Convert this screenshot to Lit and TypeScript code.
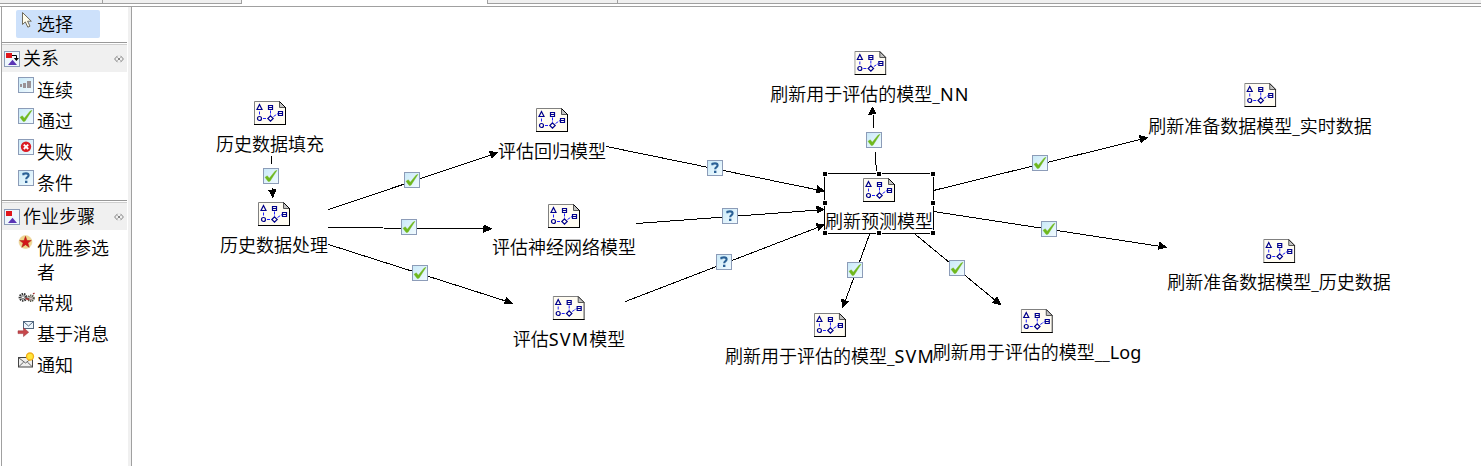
import { LitElement, html, svg, css } from "lit";
import { customElement, property } from "lit/decorators.js";

type Kind = "pass" | "cond" | "fail" | "seq";

const TILE_ART: Record<Kind, unknown> = {
  pass: svg`<path d="M2 9.300 L4.300 7.800 L6.300 10.200 L12 3.200 L14 2.300 L7 13.200 L5.200 13.500z" fill="#6fb81e" stroke="#6fb81e" stroke-width=".4"/>`,
  cond: svg`<path d="M5.400 5.200 V3.800 Q6.600 3.400 8 3.400 Q10.600 3.400 10.600 5.300 Q10.600 6.500 9.200 7.300 Q8.200 7.900 8.200 9.300" fill="none" stroke="#2b6196" stroke-width="2.100"/><rect x="7" y="10.700" width="2.400" height="2.300" fill="#2b6196"/>`,
  fail: svg`<circle cx="8" cy="7.800" r="5.200" fill="#da1c24"/><path d="M5.800 5.600 L10.200 10 M10.200 5.600 L5.800 10" stroke="#fff" stroke-width="1.900"/>`,
  seq: svg`<path d="M2 7h2v3H2z M5 6h3v5H5z M9 4h4v7H9z" fill="#9a9296" shape-rendering="crispEdges"/>`,
};

const tile = (kind: Kind) => svg`
  <rect x=".5" y=".5" width="15" height="15" fill="url(#tile)" stroke="#8c9cb8"/>
  ${TILE_ART[kind]}`;

const tileGradient = svg`
  <defs><linearGradient id="tile" x1="0" y1="0" x2="1" y2="1">
    <stop offset="0" stop-color="#c9e9f8"/><stop offset="1" stop-color="#f2fbff"/>
  </linearGradient></defs>`;

@customElement("palette-icon")
class PaletteIcon extends LitElement {
  static styles = css`
    :host { display: block; width: 16px; height: 16px; }
    svg { display: block; overflow: visible; }
  `;
  @property() name = "";

  private art() {
    switch (this.name) {
      case "relations":
        return svg`<rect x=".5" y=".5" width="15" height="15" fill="#eef7fd" stroke="#8c9cb8"/>
          <rect x="2" y="2" width="6" height="5" fill="#e0161c"/>
          <path d="M4 14 L8.500 8.800 L13 14z" fill="#5b35b5"/>
          <path d="M8 4.500h4.500v4" fill="none" stroke="#000"/><path d="M9.800 7h5.200l-2.600 3z"/>`;
      case "steps":
        return svg`<rect x=".5" y=".5" width="15" height="15" fill="#eef7fd" stroke="#8c9cb8"/>
          <rect x="2" y="2" width="6" height="5" fill="#e0161c"/>
          <path d="M4 14 L8.500 8.800 L13 14z" fill="#5b35b5"/>`;
      case "star":
        return svg`<circle cx="7.500" cy="7" r="6.500" fill="#f0d68c" stroke="#e8cf98" stroke-width=".6"/>
          <path d="M7.500 1.300 L9 5.500 H13.300 L9.900 8.100 L11.200 12.300 L7.500 9.700 L3.800 12.300 L5.100 8.100 L1.700 5.500 H6z" fill="#d3161b" stroke="#a52318" stroke-width=".5"/>`;
      case "gears":
        return svg`<circle cx="5" cy="7.300" r="3.300" fill="#ddd" stroke="#333" stroke-width="2.200" stroke-dasharray="1.400 .9"/>
          <circle cx="5" cy="7.300" r="1.500" fill="#fff" stroke="#555" stroke-width=".7"/>
          <circle cx="13" cy="8.300" r="2.800" fill="#ddd" stroke="#554" stroke-width="2" stroke-dasharray="1.200 .8"/>
          <circle cx="13" cy="8.300" r="1.200" fill="#fff" stroke="#755" stroke-width=".7"/>
          <path d="M7.500 8.500l3.500 1M15 4l1.500-.8" stroke="#a32b2b" stroke-width="1.400"/>`;
      case "message":
        return svg`<rect x="5.500" y=".5" width="10" height="7" fill="#eef6fc" stroke="#51677f"/>
          <path d="M6 1l4.500 4L15 1" fill="none" stroke="#51677f"/>
          <path d="M0 9.800h5.500v-3l5.200 4.400-5.200 4.400v-3H0z" fill="#c8474b" stroke="#963138" stroke-width=".5"/>`;
      case "notify":
        return svg`<rect x=".5" y="5.500" width="14" height="9.500" fill="#eee" stroke="#444"/>
          <path d="M1 6l6.500 5L14 6M1 14.500l4.700-4.500M14 14.500l-4.700-4.500" fill="none" stroke="#666"/>
          <circle cx="12" cy="4.500" r="3.500" fill="#ffe63b" stroke="#f3ae19" stroke-width="1.300"/>`;
      case "cursor":
        return svg`<path d="M.5 .5 V12.500 L3.300 9.900 L5.800 15.200 L8 14.200 L5.600 9.200 H9.300z" fill="#fffdec" stroke="#6e6a5c"/>`;
      default:
        return tile(this.name as Kind);
    }
  }
  render() {
    return html`<svg width="16" height="16" viewBox="0 0 16 16">${tileGradient}${this.art()}</svg>`;
  }
}

@customElement("tool-palette")
class ToolPalette extends LitElement {
  static styles = css`
    :host {
      display: block; box-sizing: border-box; width: 130px; flex: none;
      border-left: 1px solid #a0a0a0; border-right: 3px solid #f0f0f0;
      padding: 3px 0 0 0;
    }
    .select {
      display: flex; box-sizing: border-box; width: 84px; height: 28px; margin-left: 14px;
      padding: 2px 0 0 6px; background: #cde1fb; border-radius: 2px;
    }
    .select .text { margin-left: -1px; }
    .head {
      display: flex; box-sizing: border-box; width: 125px; height: 30px;
      border-top: 1px solid #989898; padding: 1px 0 0;
    }
    .bar {
      display: flex; box-sizing: border-box; align-items: flex-start; width: 100%; height: 28px;
      border-top: 1px solid #cfcfcf; background: #f0f0f0; padding: 1px 3px 0 2px;
    }
    .bar palette-icon { margin-top: 5px; }
    .bar .text { flex: 1; margin-left: 3px; }
    .text { line-height: 24px; white-space: pre-line; }
    .first { margin-top: 4px; }
    .items { display: flex; flex-direction: column; gap: 7px; padding: 5px 0 0 16px; }
    .relations { height: 128px; box-sizing: border-box; }
    .item { display: flex; gap: 3px; }
    .item .text { padding-top: 1px; margin-bottom: -1px; }
    .pin { display: block; margin-top: 9px; }
  `;

  private head(icon: string, label: string, cls = "") {
    return html`<div class="head ${cls}"><div class="bar">
      <palette-icon name=${icon}></palette-icon><span class="text">${label}</span>
      <svg class="pin" width="10" height="8" viewBox="0 0 10 8">
        <path d="M3.500 .8 L.6 4 L3.500 7.200 M6.500 .8 L9.400 4 L6.500 7.200 M3.500 2.500l1.500 1.500l1.500-1.500M3.500 5.500l1.500-1.500l1.500 1.500" fill="none" stroke="#777" stroke-width=".9"/>
      </svg></div></div>`;
  }
  private item(icon: string, label: string) {
    return html`<div class="item"><palette-icon name=${icon}></palette-icon><span class="text">${label}</span></div>`;
  }
  render() {
    return html`
      <div class="select"><palette-icon name="cursor"></palette-icon><span class="text">选择</span></div>
      ${this.head("relations", "关系", "first")}
      <div class="items relations">
        ${this.item("seq", "连续")}${this.item("pass", "通过")}
        ${this.item("fail", "失败")}${this.item("cond", "条件")}
      </div>
      ${this.head("steps", "作业步骤")}
      <div class="items">
        ${this.item("star", "优胜参选\n者")}${this.item("gears", "常规")}
        ${this.item("message", "基于消息")}${this.item("notify", "通知")}
      </div>`;
  }
}

interface FlowNode { x: number; y: number; label: string; }
interface Edge { from: [number, number]; to: [number, number]; badge: [number, number]; kind: Kind; }

const NODES: FlowNode[] = [
  { x: 270, y: 101, label: "历史数据填充" },
  { x: 274, y: 202, label: "历史数据处理" },
  { x: 552, y: 108, label: "评估回归模型" },
  { x: 564, y: 204, label: "评估神经网络模型" },
  { x: 569, y: 296, label: "评估SVM模型" },
  { x: 870, y: 51, label: "刷新用于评估的模型_NN" },
  { x: 879, y: 178, label: "刷新预测模型" },
  { x: 1260, y: 83, label: "刷新准备数据模型_实时数据" },
  { x: 1279, y: 239, label: "刷新准备数据模型_历史数据" },
  { x: 830, y: 313, label: "刷新用于评估的模型_SVM" },
  { x: 1037, y: 309, label: "刷新用于评估的模型__Log" },
];

const EDGES: Edge[] = [
  { from: [271, 156], to: [272.5, 198], badge: [271, 176], kind: "pass" },
  { from: [328, 209], to: [498, 152], badge: [412, 180], kind: "pass" },
  { from: [328, 227], to: [492, 228.5], badge: [409, 227], kind: "pass" },
  { from: [328, 244], to: [513, 303], badge: [420, 273], kind: "pass" },
  { from: [606, 146], to: [825, 191], badge: [715, 168], kind: "cond" },
  { from: [636, 223], to: [825, 209], badge: [730, 216], kind: "cond" },
  { from: [625, 301], to: [825, 224], badge: [724, 262], kind: "cond" },
  { from: [876, 173], to: [872, 106], badge: [874, 140], kind: "pass" },
  { from: [933, 190], to: [1148, 137], badge: [1040, 163], kind: "pass" },
  { from: [933, 211], to: [1167, 247], badge: [1049, 229], kind: "pass" },
  { from: [869, 234], to: [842, 308], badge: [855, 270], kind: "pass" },
  { from: [915, 234], to: [1001, 305], badge: [957, 268], kind: "pass" },
];

@customElement("flow-canvas")
class FlowCanvas extends LitElement {
  static styles = css`
    :host { display: block; flex: 1; border-left: 1px solid #a0a0a0; }
    .wires { position: absolute; left: 0; top: 0; }
    .node {
      position: absolute; display: flex; flex-direction: column; align-items: center;
      gap: 7px; transform: translateX(-50%);
    }
    .label { line-height: 24px; white-space: nowrap; }
    .latin { font-weight: 400; }
    .caps { letter-spacing: 1.2px; }
    .sheet { display: block; }
  `;

  private edge(e: Edge) {
    const dx = e.to[0] - e.from[0], dy = e.to[1] - e.from[1];
    const len = Math.hypot(dx, dy), ux = dx / len, uy = dy / len;
    const bx = e.to[0] - ux * 8.5, by = e.to[1] - uy * 8.5;
    const head = `${e.to[0] + 0.5},${e.to[1] + 0.5} ${bx - uy * 4.2},${by + ux * 4.2} ${bx + uy * 4.2},${by - ux * 4.2}`;
    const [cx, cy] = e.badge;
    return svg`
      <g shape-rendering="crispEdges">
        <line x1=${e.from[0] + 0.5} y1=${e.from[1] + 0.5} x2=${bx + 0.5} y2=${by + 0.5} stroke="#000"/>
        ${Math.abs(dy) > Math.abs(dx) * 5
          ? svg`<rect x=${cx - 8} y=${cy - 12} width="16" height="24" fill="#fff"/>` : null}
        <polygon points=${head}/>
      </g>
      <g transform="translate(${cx - 8} ${cy - 8})">${tile(e.kind)}</g>`;
  }

  private sheet() {
    return html`<svg class="sheet" width="32" height="24" viewBox="0 0 32 24">
      <path d="M.5 .5H25.500L31 6V23H.5z" fill="#fffcf2"/>
      <path d="M.5 23V.5H26" fill="none" stroke="#808080"/>
      <path d="M25.500 .5V6.500H31z" fill="#c4c4c4"/>
      <path d="M25.500 1V6.500H31" fill="none" stroke="#555"/>
      <path d="M25.500 .5L31.300 6.300M31.500 6V24M0 23.500H32" fill="none" stroke="#000"/>
      <g fill="none" stroke="#00008b" stroke-width="1.200">
        <path d="M5.500 3.500L3 8.500H8z M14.500 4.500h4v4h-4z M14.500 6.500h4 M24.500 10.500h4v4h-4z M24.500 12.500h4 M16.500 14.800l2.700 2.700-2.700 2.700-2.700-2.700z"/>
        <circle cx="5.500" cy="17.500" r="2"/>
      </g>
      <path d="M5.500 10.500v4M16.500 9.500v5M9 17.500h3M19.500 15.500L24 12.500" fill="none" stroke="#2020ff" stroke-dasharray="3 1"/>
    </svg>`;
  }

  private label(text: string) {
    return text.split(/(SVM|NN|Log)/).map((part) =>
      part === "Log" ? html`<span class="latin">${part}</span>`
      : part === "SVM" || part === "NN" ? html`<span class="latin caps">${part}</span>` : part);
  }

  render() {
    return html`
      ${NODES.map((n) => html`<div class="node" style="left:${n.x}px;top:${n.y}px">
        ${this.sheet()}<span class="label">${this.label(n.label)}</span></div>`)}
      <svg class="wires" width="1481" height="466" viewBox="0 0 1481 466">
        ${tileGradient}
        ${EDGES.map((e) => this.edge(e))}
        <g shape-rendering="crispEdges">
          <rect x="824.500" y="173.500" width="109" height="60" fill="none" stroke="#000"/>
          ${[823, 877, 931].map((x) => [172, 201, 231].map((y) =>
            x === 877 && y === 201 ? null : svg`<rect x=${x - 1} y=${y - 1} width="6" height="6" fill="#fff"/><rect x=${x} y=${y} width="4" height="4"/>`))}
        </g>
      </svg>`;
  }
}

@customElement("app-root")
class AppRoot extends LitElement {
  static styles = css`
    :host {
      display: flex; flex-direction: column; position: relative; width: 1481px; height: 466px;
      overflow: hidden; background: #fff; color: #000;
      font: 350 18px/24px "Noto Sans", "Noto Sans CJK SC", sans-serif;
    }
    .tabs { display: flex; flex: none; height: 4px; }
    .tab { box-sizing: border-box; background: #f0f0f0; border-right: 1px solid #a0a0a0; border-bottom: 1px solid #a0a0a0; }
    .t1 { width: 103px; } .t2 { width: 139px; }
    .active { width: 245px; }
    .t3 { width: 131px; border-left: 1px solid #a0a0a0; }
    .t4 { flex: 1; border-right: 0; }
    .body { display: flex; flex: 1; margin-top: 2px; border-top: 1px solid #a0a0a0; }
    .edge { width: 1px; background: #fff; }
  `;
  render() {
    return html`
      <div class="tabs">
        <div class="tab t1"></div><div class="tab t2"></div><div class="active"></div>
        <div class="tab t3"></div><div class="tab t4"></div>
      </div>
      <div class="body"><div class="edge"></div><tool-palette></tool-palette><flow-canvas></flow-canvas></div>`;
  }
}
